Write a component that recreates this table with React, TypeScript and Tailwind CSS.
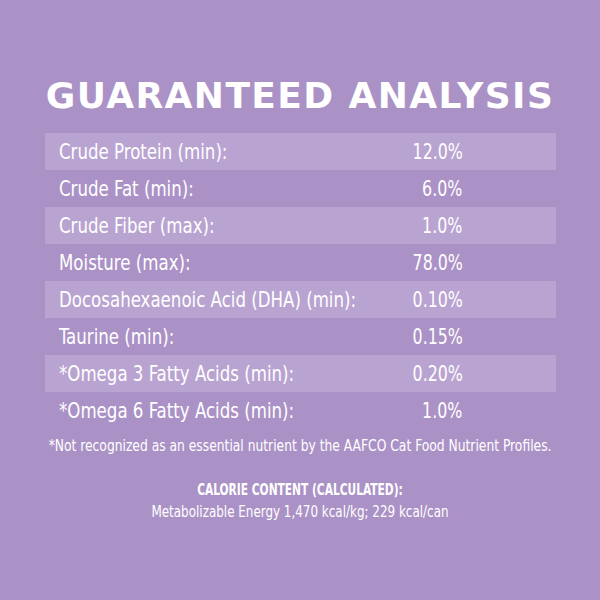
const rows = [
  { label: 'Crude Protein (min):', value: '12.0%' },
  { label: 'Crude Fat (min):', value: '6.0%' },
  { label: 'Crude Fiber (max):', value: '1.0%' },
  { label: 'Moisture (max):', value: '78.0%' },
  { label: 'Docosahexaenoic Acid (DHA) (min):', value: '0.10%' },
  { label: 'Taurine (min):', value: '0.15%' },
  { label: '*Omega 3 Fatty Acids (min):', value: '0.20%' },
  { label: '*Omega 6 Fatty Acids (min):', value: '1.0%' },
];

// condensed face; squeezed a bit more so it reads like the print label
const narrow = "font-['DejaVu_Sans_Condensed','DejaVu_Sans',sans-serif]";

export default function App() {
  return (
    <div className="flex h-[600px] w-[600px] flex-col items-center bg-[#ab92c6] pt-[76px] text-white">
      <h1 className="font-['DejaVu_Sans',sans-serif] text-[36px] font-bold leading-[40px] tracking-[1.4px]">
        GUARANTEED ANALYSIS
      </h1>
      <div className={`mt-[17px] w-[511px] ${narrow}`}>
        {rows.map((r, i) => (
          <div
            key={r.label}
            className={`flex h-[37px] items-center text-[22px] ${i % 2 === 0 ? 'bg-[#b9a4d1]' : ''}`}
          >
            <span className="w-[296px] whitespace-nowrap pl-[14px]">
              <span className="inline-block origin-left scale-x-[0.84]">{r.label}</span>
            </span>
            <span className="w-[122px] whitespace-nowrap text-right">
              <span className="inline-block origin-right scale-x-[0.8]">{r.value}</span>
            </span>
          </div>
        ))}
      </div>
      <p className={`mt-[5px] whitespace-nowrap text-[16px] ${narrow}`}>
        <span className="inline-block scale-x-[0.855]">
          *Not recognized as an essential nutrient by the AAFCO Cat Food Nutrient Profiles.
        </span>
      </p>
      <div className={`mt-[22px] flex flex-col items-center whitespace-nowrap ${narrow}`}>
        <p className="text-[16px] font-bold leading-[20px]">
          <span className="inline-block scale-x-[0.74]">CALORIE CONTENT (CALCULATED):</span>
        </p>
        <p className="text-[16px] leading-[23px]">
          <span className="inline-block scale-x-[0.83]">Metabolizable Energy 1,470 kcal/kg; 229 kcal/can</span>
        </p>
      </div>
    </div>
  );
}
